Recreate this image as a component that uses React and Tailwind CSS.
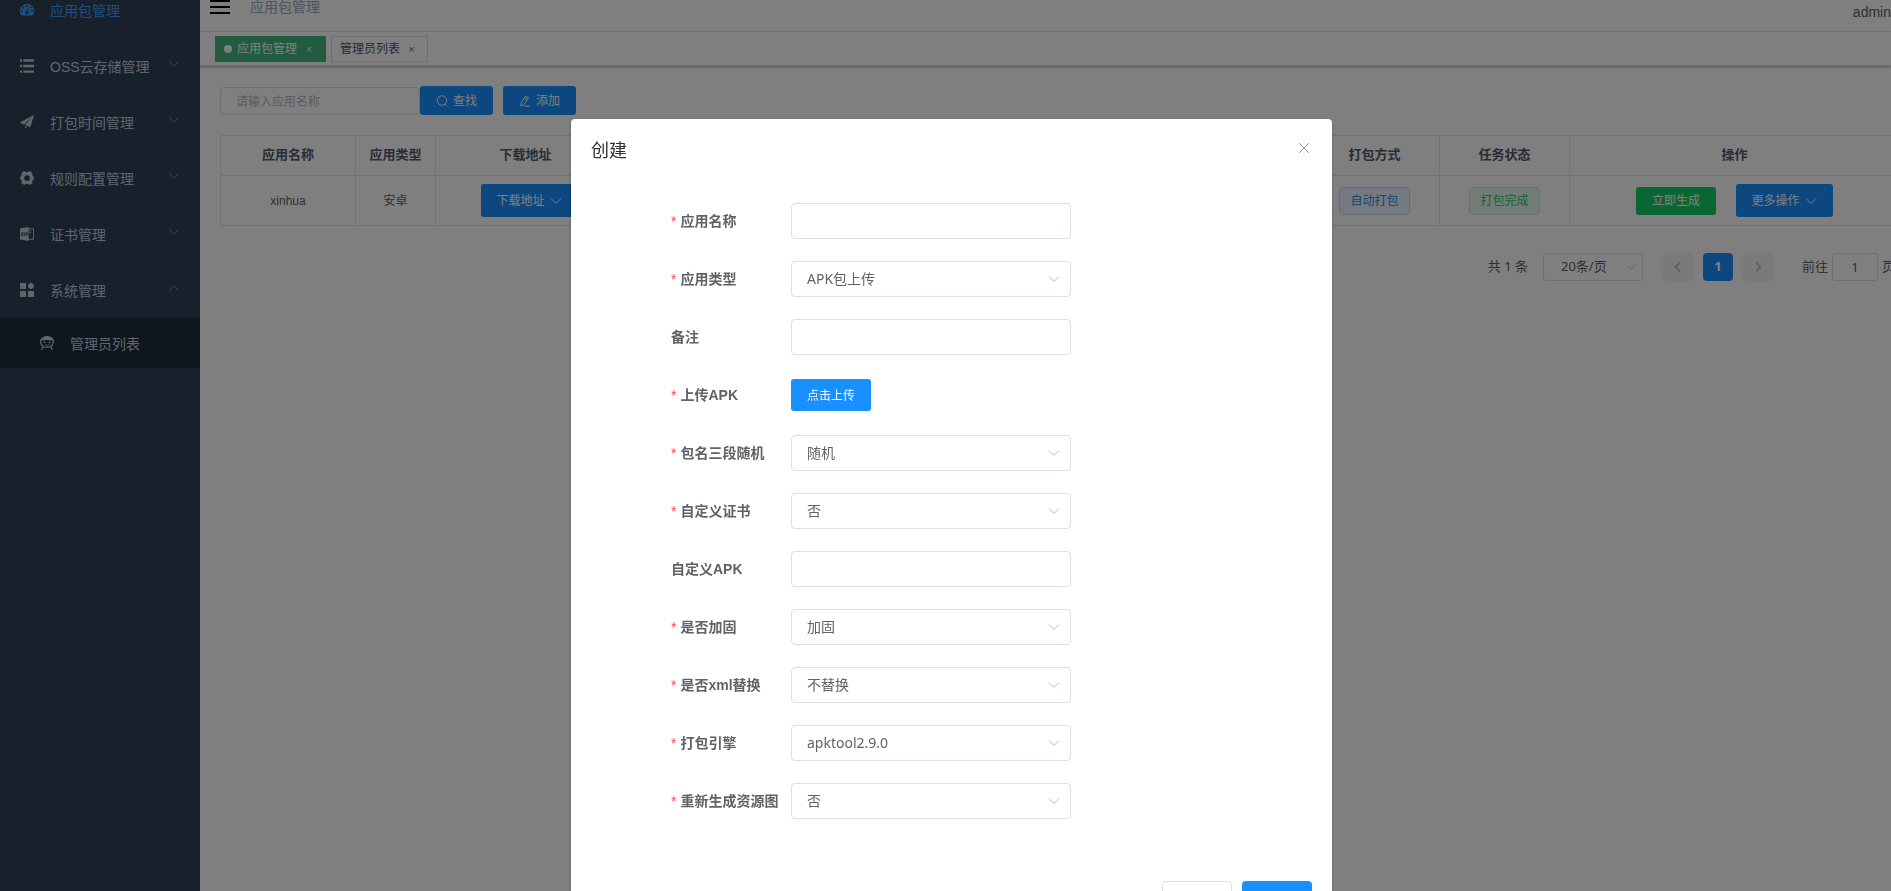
import { useState } from 'react';

const uiFont = "font-['Liberation_Sans','Noto_Sans_CJK_SC',sans-serif]";
const fieldFont = "font-['Noto_Sans','Noto_Sans_CJK_SC',sans-serif]";

function Icon({ children, className = 'size-3.5', box = 128 }) {
  return (
    <svg viewBox={`0 0 ${box} ${box}`} className={`${className} shrink-0`} fill="currentColor" aria-hidden="true">
      {children}
    </svg>
  );
}

function Chevron({ className, dir = 'down' }) {
  const paths = {
    down: 'M2 4.5 L7 9.5 L12 4.5',
    up: 'M2 9.5 L7 4.5 L12 9.5',
    left: 'M9 2.5 L4.5 7 L9 11.5',
    right: 'M5 2.5 L9.5 7 L5 11.5',
  };
  return (
    <svg viewBox="0 0 14 14" className={`${className} shrink-0`} fill="none" stroke="currentColor" aria-hidden="true">
      <path d={paths[dir]} />
    </svg>
  );
}

const DashboardIcon = () => (
  <Icon>
    <path
      fillRule="evenodd"
      d="M64 10C28 10 0 38 0 74c0 13 3 26 11 36 1 3 4 4 7 4h92c3 0 6-1 7-4 8-10 11-23 11-36 0-36-28-64-64-64zM18 65a9 9 0 1 1 0 18 9 9 0 0 1 0-18zM32 33a9 9 0 1 1 0 18 9 9 0 0 1 0-18zM64 20a9 9 0 1 1 0 18 9 9 0 0 1 0-18zM96 33a9 9 0 1 1 0 18 9 9 0 0 1 0-18zM110 65a9 9 0 1 1 0 18 9 9 0 0 1 0-18zM70 45l7 2-7 28a14 14 0 1 1-8-2z"
    />
  </Icon>
);
const ListIcon = () => (
  <Icon>
    <path d="M0 2h18v22H0zM30 2h98v22H30zM0 53h18v22H0zM30 53h98v22H30zM0 104h18v22H0zM30 104h98v22H30z" />
  </Icon>
);
const GuideIcon = () => (
  <Icon>
    <path d="M1.482 70.131l36.204 16.18 69.932-65.485-61.38 70.594 46.435 18.735c1.119.425 2.397-.17 2.797-1.363v-.085L127.998.047 1.322 65.874c-1.12.597-1.519 1.959-1.04 3.151.32.511.72.937 1.2 1.107zm44.676 57.821L64.22 107.26l-18.062-7.834v28.527z" />
  </Icon>
);
const GearIcon = () => (
  <Icon>
    <path
      fillRule="evenodd"
      d="M34 3q6-4 11 1c11 10 27 10 38 0q5-5 11-1l16 10q4 4 3 10c-3 14 2 23 12 29q3 12 3 12t-3 12c-10 6-15 15-12 29q1 6-3 10l-16 10q-6 4-11-1c-11-10-27-10-38 0q-5 5-11 1l-16-10q-4-4-3-10c3-14-2-23-12-29q-3-12-3-12t3-12c10-6 15-15 12-29q-1-6 3-10zM64 38a26 26 0 1 0 0 52 26 26 0 0 0 0-52z"
    />
  </Icon>
);
const ZipIcon = () => (
  <Icon>
    <path
      fillRule="evenodd"
      d="M78 0v12h44c4 0 6 2 6 6v92c0 4-2 6-6 6H78v12L0 114V14zM78 20v9h10v9H78v9h10v9H78v52h42V20zM92 29h10v9H92zM92 47h10v10H92zM10 50v6h12L9 76v6h24v-6H20l13-20v-6zM38 50v32h7V50zM51 50v32h7V71h6c8 0 11-5 11-11s-4-10-11-10zM58 56h5c5 0 5 9 0 9h-5z"
    />
  </Icon>
);
const ComponentIcon = () => (
  <Icon>
    <path d="M0 0h54.857v54.857H0V0zm0 73.143h54.857V128H0V73.143zm73.143 0H128V128H73.143V73.143zm27.428-18.286C115.72 54.857 128 42.577 128 27.43 128 12.28 115.72 0 100.571 0 85.423 0 73.143 12.28 73.143 27.429c0 15.148 12.28 27.428 27.428 27.428z" />
  </Icon>
);
const PeopleIcon = () => (
  <Icon>
    <path
      fillRule="evenodd"
      d="M64 0C28 0 0 24 0 54c0 17 9 32 22 42l-10 26c-1 6 9 8 11 2l10-22c9 5 20 7 31 7s22-2 31-7l10 22c2 6 12 4 11-2l-10-26c13-10 22-25 22-42C128 24 100 0 64 0zM14 42c32-8 68-8 100 0 9 32-15 57-50 57S5 74 14 42z"
    />
    <circle cx="41" cy="59" r="8" />
    <circle cx="87" cy="59" r="8" />
    <path d="M42 76c13 8 31 8 44 0v7c-13 9-31 9-44 0z" />
  </Icon>
);

const menu = [
  { label: '应用包管理', icon: DashboardIcon, active: true },
  { label: 'OSS云存储管理', icon: ListIcon, arrow: 'down' },
  { label: '打包时间管理', icon: GuideIcon, arrow: 'down' },
  { label: '规则配置管理', icon: GearIcon, arrow: 'down' },
  { label: '证书管理', icon: ZipIcon, arrow: 'down' },
  { label: '系统管理', icon: ComponentIcon, arrow: 'up' },
];

function Sidebar() {
  return (
    <nav className="w-[200px] shrink-0 bg-[#304156] text-sm text-[#bfcbd9]">
      {menu.map(({ label, icon: Glyph, active, arrow }) => (
        <a key={label} href="#" className={`flex h-14 items-center px-5 ${active ? 'text-[#409eff]' : ''}`}>
          <Glyph />
          <span className="ml-4 grow pt-0.5">{label}</span>
          {arrow && <Chevron dir={arrow} className="mb-1 size-3 text-[#909399]" />}
        </a>
      ))}
      <a href="#" className="flex h-[50px] items-center bg-[#1f2d3d] px-10">
        <PeopleIcon />
        <span className="ml-4 pt-0.5 whitespace-nowrap">管理员列表</span>
      </a>
    </nav>
  );
}

function Header() {
  const tab = 'flex h-[26px] items-center border px-2 pt-px';
  return (
    <header>
      <div className="flex h-[50px] items-center justify-between border-b border-[#f5f6f7] pl-2.5">
        <div className="flex items-center gap-5">
          <button type="button" aria-label="menu">
            <svg viewBox="0 0 20 14" className="h-3.5 w-5" aria-hidden="true">
              <path d="M0 0h20v2H0zM0 6h20v2H0zM0 12h20v2H0z" />
            </svg>
          </button>
          <span className="text-sm text-[#97a8be]">应用包管理</span>
        </div>
        <span className="pt-2.5 text-sm text-[#5a5e66]">admin</span>
      </div>
      <div className="flex h-[34px] items-center gap-[5px] border-b border-[#d8dce5] pl-[15px] text-xs shadow-[0_1px_3px_0_rgba(0,0,0,.3),0_0_3px_0_rgba(0,0,0,.1)]">
        <a href="#" className={`${tab} border-[#42b983] bg-[#42b983] text-white`}>
          <span className="mr-[5px] size-2 rounded-full bg-white" />
          应用包管理
          <span className="ml-1 w-4 text-center text-[11px] opacity-80">×</span>
        </a>
        <a href="#" className={`${tab} border-[#d8dce5] text-[#495060]`}>
          管理员列表
          <span className="ml-1 w-[15px] text-center text-[11px] opacity-80">×</span>
        </a>
      </div>
    </header>
  );
}

const solid = 'flex items-center justify-center rounded-[3px] text-xs text-white whitespace-nowrap';
const th = 'h-10 border border-[#dfe6ec] pb-0.5 text-[13px] font-bold text-[#515a6e]';
const td = 'h-[50px] border border-[#dfe6ec] text-center text-xs text-[#606266]';

function Toolbar() {
  return (
    <div className="flex items-end">
      <input
        aria-label="应用名称"
        placeholder="请输入应用名称"
        className={`${fieldFont} h-7 w-[200px] rounded border border-[#dcdfe6] px-[15px] text-xs placeholder:text-[#b4b8c0]`}
      />
      <button type="button" className={`${solid} h-[29px] w-[73px] gap-[5px] bg-[#1890ff]`}>
        <svg viewBox="0 0 12 12" className="size-3" fill="none" stroke="currentColor" aria-hidden="true">
          <circle cx="6" cy="5.5" r="4.7" />
          <path d="M9 9l2 2.3" />
        </svg>
        查找
      </button>
      <button type="button" className={`${solid} ml-2.5 h-[29px] w-[73px] gap-[5px] bg-[#1890ff]`}>
        <svg viewBox="0 0 12 12" className="size-3" fill="none" stroke="currentColor" aria-hidden="true">
          <path d="M6.8 1.2l2.6 1.5-4.6 7.2-3 1 .4-3.2zM5.8 3l2.6 1.5M5.5 11.2h5.5" />
        </svg>
        添加
      </button>
    </div>
  );
}

function AppTable() {
  return (
    <div className="-mr-[29px] mt-5">
      <table className="w-full table-fixed border-collapse">
        <colgroup>
          <col className="w-[135px]" />
          <col className="w-20" />
          <col className="w-[180px]" />
          <col />
          <col className="w-[130px]" />
          <col className="w-[130px]" />
          <col className="w-[330px]" />
        </colgroup>
        <thead>
          <tr>
            <th className={th}>应用名称</th>
            <th className={th}>应用类型</th>
            <th className={th}>下载地址</th>
            <td className={th} />
            <th className={th}>打包方式</th>
            <th className={th}>任务状态</th>
            <th className={th}>操作</th>
          </tr>
        </thead>
        <tbody>
          <tr>
            <td className={td}>xinhua</td>
            <td className={td}>安卓</td>
            <td className={`${td} pl-2`}>
              <button type="button" className={`${solid} mx-auto h-[33px] w-[97px] gap-1 bg-[#1890ff]`}>
                下载地址
                <Chevron className="size-3.5" />
              </button>
            </td>
            <td className={td} />
            <td className={td}>
              <span className="inline-flex h-7 items-center rounded border border-[#b8dcff] bg-[#e8f4ff] px-2.5 align-middle text-[#1890ff]">
                自动打包
              </span>
            </td>
            <td className={td}>
              <span className="inline-flex h-7 items-center rounded border border-[#b8f0cf] bg-[#e7faf0] px-2.5 align-middle text-[#13ce66]">
                打包完成
              </span>
            </td>
            <td className={td}>
              <div className="flex items-center justify-center gap-5">
                <button type="button" className={`${solid} h-7 w-20 bg-[#13ce66]`}>
                  立即生成
                </button>
                <button type="button" className={`${solid} h-[33px] w-[97px] gap-1 bg-[#1890ff]`}>
                  更多操作
                  <Chevron className="size-3.5" />
                </button>
              </div>
            </td>
          </tr>
        </tbody>
      </table>
    </div>
  );
}

function Pagination() {
  const step = 'flex h-7 w-[30px] items-center justify-center rounded-sm';
  return (
    <div className={`${fieldFont} -mr-6 mt-[27px] flex items-center justify-end text-[13px] text-[#606266]`}>
      <span className="mr-[15px]">共 1 条</span>
      <span className="relative">
        <select
          aria-label="每页条数"
          className="h-7 w-[100px] appearance-none rounded-[3px] border border-[#dcdfe6] pl-[17px]"
        >
          <option>20条/页</option>
        </select>
        <Chevron className="pointer-events-none absolute right-1.5 top-2 size-3 text-[#c0c4cc]" />
      </span>
      <div className="ml-5 flex gap-2.5">
        <button type="button" aria-label="上一页" className={`${step} bg-[#f4f4f5] text-[#c0c4cc]`}>
          <Chevron dir="left" className="size-3.5 stroke-2" />
        </button>
        <button type="button" className={`${step} bg-[#1890ff] font-bold text-white`}>
          1
        </button>
        <button type="button" aria-label="下一页" className={`${step} bg-[#f4f4f5] text-[#c0c4cc]`}>
          <Chevron dir="right" className="size-3.5 stroke-2" />
        </button>
      </div>
      <label className="ml-[29px] flex items-center gap-1">
        前往
        <input defaultValue="1" className="h-7 w-[46px] rounded-[3px] border border-[#dcdfe6] text-center" />
        页
      </label>
    </div>
  );
}

const fields = [
  { id: 'name', label: '应用名称', required: true, type: 'text' },
  { id: 'kind', label: '应用类型', required: true, type: 'select', value: 'APK包上传' },
  { id: 'remark', label: '备注', type: 'text' },
  { id: 'upload', label: '上传APK', required: true, type: 'upload' },
  { id: 'random', label: '包名三段随机', required: true, type: 'select', value: '随机' },
  { id: 'cert', label: '自定义证书', required: true, type: 'select', value: '否' },
  { id: 'custom', label: '自定义APK', type: 'text' },
  { id: 'harden', label: '是否加固', required: true, type: 'select', value: '加固' },
  { id: 'xml', label: '是否xml替换', required: true, type: 'select', value: '不替换' },
  { id: 'engine', label: '打包引擎', required: true, type: 'select', value: 'apktool2.9.0' },
  { id: 'image', label: '重新生成资源图', required: true, type: 'select', value: '否' },
];

function Field({ id, label, required, type, value }) {
  const box = `${fieldFont} h-9 w-full appearance-none rounded border border-[#dcdfe6] bg-white px-[15px] text-sm text-[#606266]`;
  return (
    <div className="flex h-9 items-center">
      <label htmlFor={id} className="w-[120px] shrink-0 whitespace-nowrap text-sm font-bold text-[#606266]">
        {required && <span className="mr-1 font-normal text-[#ff4949]">*</span>}
        {label}
      </label>
      {type === 'text' && (
        <div className="w-[280px]">
          <input id={id} className={box} />
        </div>
      )}
      {type === 'select' && (
        <div className="relative w-[280px]">
          <select id={id} className={box}>
            <option>{value}</option>
          </select>
          <Chevron className="pointer-events-none absolute right-2.5 top-[11px] size-3.5 text-[#b4b8c0]" />
        </div>
      )}
      {type === 'upload' && (
        <button id={id} type="button" className={`${solid} h-8 w-20 bg-[#1890ff] pt-0.5`}>
          点击上传
        </button>
      )}
    </div>
  );
}

function CreateDialog({ onClose }) {
  return (
    <div className="fixed inset-0 overflow-hidden bg-black/50 pl-3">
      <div
        role="dialog"
        aria-labelledby="dialog-title"
        className="mx-auto mt-[119px] w-[761px] max-w-full rounded-sm bg-white shadow-[0_1px_3px_rgba(0,0,0,.3)]"
      >
        <div className="flex h-[54px] items-center justify-between px-5 pt-2.5">
          <h2 id="dialog-title" className="text-lg text-[#303133]">
            创建
          </h2>
          <button type="button" aria-label="关闭" onClick={onClose} className="mb-1.5 py-0.5 pl-0.5 text-[#909399]">
            <svg viewBox="0 0 16 16" className="size-4" fill="none" stroke="currentColor" aria-hidden="true">
              <path d="M3 3l10 10M13 3L3 13" />
            </svg>
          </button>
        </div>
        <form className="flex flex-col gap-[22px] pt-[30px] pr-5 pb-[52px] pl-[100px]" onSubmit={(e) => e.preventDefault()}>
          {fields.map((f) => (
            <Field key={f.id} {...f} />
          ))}
        </form>
        <div className="flex justify-end gap-2.5 px-5 pt-2.5 pb-5 text-sm">
          <button type="button" onClick={onClose} className="h-9 w-[70px] rounded border border-[#dcdfe6] text-[#606266]">
            取消
          </button>
          <button type="button" className="h-9 w-[70px] rounded bg-[#1890ff] text-white">
            确定
          </button>
        </div>
      </div>
    </div>
  );
}

export default function App() {
  const [open, setOpen] = useState(true);
  return (
    <div className={`${uiFont} h-screen overflow-hidden bg-white`}>
      <div className="-mt-[18px] flex min-h-[calc(100vh+18px)]">
        <Sidebar />
        <div className="min-w-0 grow overflow-hidden">
          <Header />
          <main className="p-5">
            <Toolbar />
            <AppTable />
            <Pagination />
          </main>
        </div>
      </div>
      {open && <CreateDialog onClose={() => setOpen(false)} />}
    </div>
  );
}
